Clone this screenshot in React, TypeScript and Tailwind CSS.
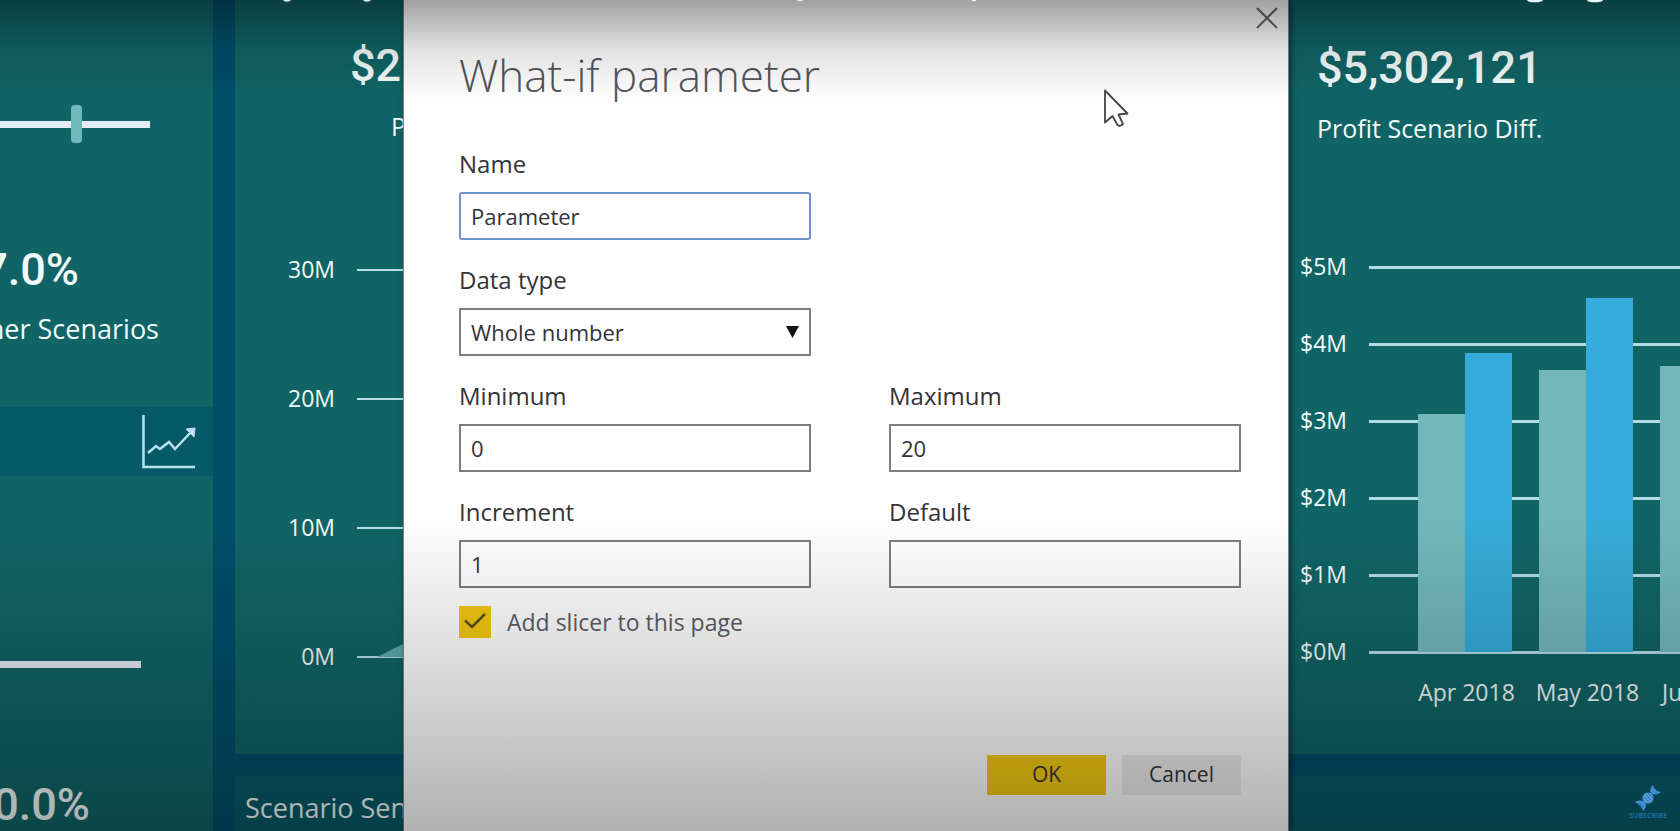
import { useState } from "react";

const leftTicks = ["30M", "20M", "10M", "0M"];
const rightTicks = ["$5M", "$4M", "$3M", "$2M", "$1M", "$0M"];
const months = [
  { label: "Apr 2018", base: 238, scenario: 299 },
  { label: "May 2018", base: 282, scenario: 354 },
  { label: "Jun 2018", base: 286, scenario: 362 },
];

function TrendIcon() {
  return (
    <svg className="h-[54px] w-[54px]" viewBox="0 0 54 54" fill="none" stroke="#b9e2ee" strokeWidth="2.5" aria-hidden="true">
      <path d="M1.500 0V52H53" />
      <path d="M6 38l8-7 4 3 9-7 6 7 17-18" />
      <path d="M44 14l9-1-1 9z" fill="#b9e2ee" strokeWidth="1" />
    </svg>
  );
}

function SliderTrack({ handle }: { handle: boolean }) {
  return (
    <div className={handle ? "flex h-[38px] w-[150px] items-center" : "flex h-[38px] w-[141px] items-center"}>
      <div className={handle ? "h-[7px] w-[71px] bg-[#e4edf3]" : "h-[7px] w-full bg-[#e4edf3]"} />
      {handle && <div className="h-[38px] w-[11px] rounded-sm bg-[#6fb9bb]" />}
      {handle && <div className="h-[7px] flex-1 bg-[#e4edf3]" />}
    </div>
  );
}

function ScenarioColumn() {
  return (
    <aside className="flex w-[213px] shrink-0 flex-col overflow-hidden bg-[#106466]">
      <div className="flex h-[407px] shrink-0 flex-col pt-[105px]">
        <SliderTrack handle />
        <div className="flex w-[79px] justify-end pt-[97px] font-[Roboto] text-[45px] leading-[60px] font-medium">7.0%</div>
        <div className="flex w-[159px] justify-end pt-[9px] text-[27px] leading-[40px] whitespace-nowrap">Other Scenarios</div>
      </div>
      <div className="flex h-[69px] shrink-0 items-center justify-end bg-[#065a68] pr-[17px]">
        <TrendIcon />
      </div>
      <div className="pt-[169px]">
        <SliderTrack handle={false} />
        <div className="flex w-[90px] justify-end pt-[92px] font-[Roboto] text-[45px] leading-[60px] font-medium">10.0%</div>
      </div>
    </aside>
  );
}

function ProfitChart() {
  return (
    <section className="flex min-w-0 flex-1 flex-col pr-[200px]">
      <div className="pt-[36px] pl-[115px] font-[Roboto] text-[45px] leading-[60px] font-medium">$2</div>
      <div className="pt-[10px] pl-[156px] text-[25px] leading-[40px]">P</div>
      <div className="relative pt-[107px]">
        {leftTicks.map((tick) => (
          <div key={tick} className="flex h-[129px] items-start">
            <span className="w-[100px] text-right text-[23px] leading-[32px]">{tick}</span>
            <span className="mt-[16px] ml-[22px] h-[2px] flex-1 bg-[#b9dde8]" />
          </div>
        ))}
        <svg className="absolute bottom-[112px] left-[142px] h-[60px] w-[240px]" viewBox="0 0 240 60" aria-hidden="true">
          <path d="M0 60L24 48L110 18L240 0V60Z" fill="#5fabac" />
        </svg>
      </div>
    </section>
  );
}

function DifferenceChart() {
  return (
    <section className="w-[380px] shrink-0 overflow-hidden">
      <div className="pt-[38px] pl-[17px] font-[Roboto] text-[45px] leading-[60px] font-medium">$5,302,121</div>
      <div className="pt-[10px] pl-[17px] text-[25px] leading-[40px]">Profit Scenario Diff.</div>
      <div className="relative pt-[102px]">
        {rightTicks.map((tick) => (
          <div key={tick} className="flex h-[77px] items-start">
            <span className="w-[47px] text-right text-[23px] leading-[32px]">{tick}</span>
            <span className="mt-[16px] ml-[22px] h-[3px] flex-1 bg-[#b3dbe6]" />
          </div>
        ))}
        <div className="absolute bottom-[60px] left-[118px] flex items-end gap-[27px]">
          {months.map((month) => (
            <div key={month.label} className="flex items-end">
              <div className="w-[47px] bg-[#72b7bb]" style={{ height: month.base }} />
              <div className="w-[47px] bg-[#35acd9]" style={{ height: month.scenario }} />
            </div>
          ))}
        </div>
        <div className="absolute bottom-0 left-[106px] flex">
          {months.map((month) => (
            <span key={month.label} className="w-[121px] text-center text-[23px] leading-[40px] whitespace-nowrap">{month.label}</span>
          ))}
        </div>
      </div>
    </section>
  );
}

function Field({ id, label, defaultValue, focused }: { id: string; label: string; defaultValue: string; focused?: boolean }) {
  return (
    <div className="flex flex-col gap-3">
      <label htmlFor={id} className="text-[24px] leading-8">{label}</label>
      <input
        id={id}
        defaultValue={defaultValue}
        className={
          focused
            ? "h-12 w-full rounded-[3px] border-2 border-[#6d92cf] bg-white px-[10px] text-[22px] outline-none"
            : "h-12 w-full border-2 border-[#7d7d7d] bg-white px-[10px] text-[22px] outline-none"
        }
      />
    </div>
  );
}

function ParameterDialog() {
  const [addSlicer, setAddSlicer] = useState(true);
  return (
    <div role="dialog" aria-labelledby="dialog-title" className="relative flex w-[886px] flex-col border-x border-[#77838c] bg-[#fefefe] pr-[47px] pb-[36px] pl-[55px] text-[#333338] shadow-[2px_0_6px_rgba(0,0,0,0.5)]">
      <button type="button" aria-label="Close" className="absolute top-[7px] right-[10px]">
        <svg className="h-[22px] w-[22px]" viewBox="0 0 22 22" fill="none" stroke="#666" strokeWidth="2" aria-hidden="true">
          <path d="M1 1L21 21M21 1L1 21" />
        </svg>
      </button>
      <h1 id="dialog-title" className="pt-[45px] text-[44px] leading-[60px] font-light text-[#55555a]">What-if parameter</h1>
      <form className="flex flex-1 flex-col pt-[43px]" onSubmit={(event) => event.preventDefault()}>
        <div className="grid grid-cols-2 gap-x-[78px] gap-y-6">
          <Field id="name" label="Name" defaultValue="Parameter" focused />
          <div className="col-start-1 flex flex-col gap-3">
            <label htmlFor="data-type" className="text-[24px] leading-8">Data type</label>
            <div className="relative">
              <select id="data-type" className="h-12 w-full appearance-none border-2 border-[#7d7d7d] bg-white px-[10px] text-[22px] outline-none">
                <option>Whole number</option>
                <option>Decimal number</option>
              </select>
              <svg className="pointer-events-none absolute top-[18px] right-[12px] h-[12px] w-[13px]" viewBox="0 0 13 12" aria-hidden="true">
                <path d="M0 0H13L6.500 12Z" fill="#111" />
              </svg>
            </div>
          </div>
          <div className="col-start-1"><Field id="minimum" label="Minimum" defaultValue="0" /></div>
          <Field id="maximum" label="Maximum" defaultValue="20" />
          <Field id="increment" label="Increment" defaultValue="1" />
          <Field id="default" label="Default" defaultValue="" />
        </div>
        <label className="flex items-center gap-4 pt-[18px] text-[23px] leading-8 text-[#5c5c62]">
          <span className="relative flex h-8 w-8">
            <input type="checkbox" checked={addSlicer} onChange={(event) => setAddSlicer(event.target.checked)} className="h-8 w-8 appearance-none bg-[#f2c811]" />
            {addSlicer && (
              <svg className="pointer-events-none absolute inset-0 h-8 w-8" viewBox="0 0 32 32" fill="none" stroke="#59501a" strokeWidth="2.5" aria-hidden="true">
                <path d="M6 14.500L13 21L26 8" />
              </svg>
            )}
          </span>
          Add slicer to this page
        </label>
        <div className="mt-auto flex justify-end gap-4 text-[21px]">
          <button type="submit" className="h-10 w-[119px] bg-[#f2c811]">OK</button>
          <button type="button" className="h-10 w-[119px] bg-[#ebebeb]">Cancel</button>
        </div>
      </form>
    </div>
  );
}

function CaptionEdge() {
  return (
    <svg className="pointer-events-none absolute top-0 left-0 h-[3px] w-[1680px]" viewBox="0 0 1680 3" fill="#e6f6f6" aria-hidden="true">
      <ellipse cx="287" cy="0" rx="3.5" ry="1.5" />
      <ellipse cx="367" cy="0" rx="3.5" ry="1.5" />
      <ellipse cx="800" cy="0" rx="3" ry="1.3" />
      <ellipse cx="974" cy="0" rx="2.5" ry="1.3" />
      <ellipse cx="1535" cy="0" rx="8" ry="2.3" />
      <ellipse cx="1595" cy="0" rx="8" ry="2.3" />
    </svg>
  );
}

function SubscribeBadge() {
  return (
    <a href="#subscribe" className="absolute right-[13px] bottom-[11px] flex flex-col items-center text-[#1d6aa5]">
      <svg className="h-[28px] w-[28px]" viewBox="0 0 28 28" fill="none" aria-hidden="true">
        <path d="M19 1C20 5 23 7 27 8C25 10 21 11 18 10L16 8C16 5 17 3 19 1ZM1 18C4 16 8 16 10 18L12 20C12 23 11 25 9 27C8 23 5 20 1 18Z" fill="#3f8ed6" />
        <circle cx="14" cy="14" r="5.5" fill="#5299da" />
        <path d="M10 13l5 5M12 11l5 5M14 9l5 5M20 4l4 4M5 19l4 4" stroke="#1d5f9c" strokeWidth="0.8" />
      </svg>
      <span className="text-[7px] leading-[8px] font-bold">SUBSCRIBE</span>
    </a>
  );
}

export default function App() {
  return (
    <main className="relative flex min-h-screen overflow-hidden bg-[#004e69] font-['Open_Sans',sans-serif] text-[#f2fafa]">
      <div className="absolute inset-0 flex gap-[22px]">
        <ScenarioColumn />
        <div className="flex min-w-0 flex-1 flex-col gap-[22px]">
          <div className="flex h-[754px] shrink-0 bg-[#106466]">
            <ProfitChart />
            <DifferenceChart />
          </div>
          <div className="flex-1 bg-[#075a68] pt-[10px] pl-[10px] text-[27px] leading-[44px] whitespace-nowrap">Scenario Sen</div>
        </div>
      </div>
      <div className="relative flex min-h-screen w-full justify-center pl-3">
        <ParameterDialog />
      </div>
      <div className="pointer-events-none absolute inset-x-0 top-0 h-[100px] bg-linear-to-b from-black/37 via-black/11 to-transparent" />
      <div className="pointer-events-none absolute inset-x-0 bottom-0 h-[310px] bg-linear-to-t from-black/30 to-transparent" />
      <CaptionEdge />
      <svg className="pointer-events-none absolute top-[89px] left-[1103px] h-[40px] w-[28px]" viewBox="0 0 28 40" fill="#fff" stroke="#444" strokeWidth="1.8" strokeLinejoin="round" aria-hidden="true">
        <path d="M2 1.500V33.500L9.500 27L14.500 36Q17 38 20 35L15.500 25.500L24.500 24.500Z" />
      </svg>
      <SubscribeBadge />
    </main>
  );
}
